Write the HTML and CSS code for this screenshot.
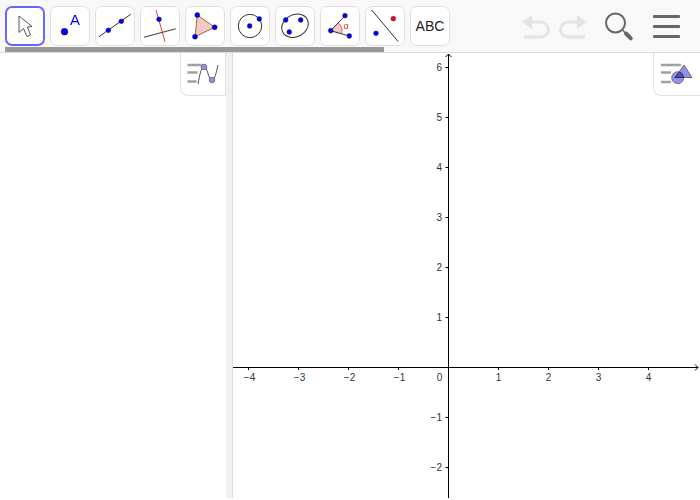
FILE: index.html
```html
<!DOCTYPE html>
<html lang="en">
<head>
<meta charset="utf-8">
<title>GeoGebra Graphing</title>
<link rel="stylesheet" href="styles.css">
</head>
<body>
<div class="app">
  <header class="toolbar">
    <div class="tools">
      <button class="tool active"><svg viewBox="0 0 36 36"><path d="M12 8v16.500l4.500-4 3.500 8 3.500-1.500-3-8 4.500-.500z" fill="#fff" stroke="#555" stroke-width="1"/></svg></button>
      <button class="tool"><svg viewBox="0 0 38 38"><circle cx="13.500" cy="24.700" r="3.400" class="pt"/><text x="19" y="18" class="ico-a">A</text></svg></button>
      <button class="tool"><svg viewBox="0 0 38 38"><line x1="3" y1="29.700" x2="34.700" y2="7.300" class="ln"/><circle cx="12.300" cy="23.300" r="2.400" class="pt"/><circle cx="25.300" cy="14.300" r="2.400" class="pt"/></svg></button>
      <button class="tool"><svg viewBox="0 0 38 38"><line x1="15" y1="3" x2="24" y2="34.700" stroke="#f33"/><line x1="3" y1="30.300" x2="34.700" y2="21.700" stroke="#444" stroke-width="1.100"/><circle cx="18" cy="12.300" r="2.400" class="pt"/></svg></button>
      <button class="tool"><svg viewBox="0 0 38 38"><path d="M11.300 8 28.700 20.300 9 29.700z" fill="#eecbc3" stroke="#a5654f"/><circle cx="11.300" cy="8" r="2.500" class="pt"/><circle cx="28.700" cy="20.300" r="2.500" class="pt"/><circle cx="9" cy="29.700" r="2.500" class="pt"/></svg></button>
      <button class="tool"><svg viewBox="0 0 38 38"><circle cx="19" cy="19" r="11.700" class="cv"/><circle cx="18.700" cy="19" r="2.400" class="pt"/><circle cx="28.300" cy="12" r="2.400" class="pt"/></svg></button>
      <button class="tool"><svg viewBox="0 0 38 38"><ellipse cx="19" cy="18.800" rx="13.800" ry="11" transform="rotate(-28 19 18.800)" class="cv"/><circle cx="9.700" cy="13" r="2.400" class="pt"/><circle cx="24.700" cy="13" r="2.400" class="pt"/><circle cx="13.300" cy="25" r="2.400" class="pt"/></svg></button>
      <button class="tool"><svg viewBox="0 0 38 38"><path d="M9.700 23.700 17 15.700a11 11 0 0 1 3.700 10.700z" fill="#eecbc3"/><path d="M24 8.700 9.700 23.700 28.300 29" class="cv"/><path d="M17 15.700a11 11 0 0 1 3.700 10.700" fill="none" stroke="#e55"/><text x="22.500" y="21.500" class="ico-alpha">α</text><circle cx="24" cy="8.700" r="2.400" class="pt"/><circle cx="9.700" cy="23.700" r="2.400" class="pt"/><circle cx="28.300" cy="29" r="2.400" class="pt"/></svg></button>
      <button class="tool"><svg viewBox="0 0 38 38"><line x1="5.700" y1="3" x2="32.300" y2="34.700" class="ln"/><circle cx="27.300" cy="11.700" r="2.400" fill="#e6001e" stroke="#600" stroke-width=".4"/><circle cx="10" cy="26.300" r="2.400" class="pt"/></svg></button>
      <button class="tool abc">ABC</button>
    </div>
    <div class="scrollbar"></div>
    <div class="actions">
      <svg class="undo" viewBox="0 0 30 26"><path d="M10 7h10a7.500 7.500 0 0 1 0 15H3" class="und"/><path d="M1 7 11 0v14z" fill="#e4e4e4"/></svg>
      <svg class="redo" viewBox="0 0 30 26"><path d="M20 7H10a7.500 7.500 0 0 0 0 15h17" class="und"/><path d="M29 7 19 0v14z" fill="#e4e4e4"/></svg>
      <svg class="search" viewBox="0 0 30 30"><circle cx="11.500" cy="12" r="9.500" fill="none" stroke="#666" stroke-width="2"/><path d="M18.500 19l4 4" stroke="#666" stroke-width="1.500"/><path d="M22 22.500l4.800 4.800" stroke="#666" stroke-width="4" stroke-linecap="round"/></svg>
      <div class="menu"><span></span><span></span><span></span></div>
    </div>
  </header>
  <main class="workspace">
    <aside class="algebra">
      <button class="stylebtn stylebtn-left"><svg viewBox="0 0 36 30"><path d="M1.500 6h14M1.500 13.500h10M1.500 22.500h9" stroke="#a0a0a0" stroke-width="2.600"/><path d="M12 25C14 15 15 8 18 8 22 8 22 21 26 21 29 21 30 14 32 6" fill="none" stroke="#555"/><circle cx="18" cy="8" r="2.800" fill="#9090e8" stroke="#555" stroke-width=".7"/><circle cx="26" cy="21" r="2.800" fill="#9090e8" stroke="#555" stroke-width=".7"/></svg></button>
    </aside>
    <div class="divider"></div>
    <section class="graphics">
      <svg class="grid" width="467" height="445" viewBox="233 53 467 445">
        <path d="M233 367.500H698M695 364.500l3 3-3 3M448.500 498V54M445.500 57l3-3 3 3" fill="none" stroke="#000"/>
        <path d="M248.500 367v3M298.500 367v3M348.500 367v3M398.500 367v3M498.500 367v3M548.500 367v3M598.500 367v3M648.500 367v3M445.500 67.500h3M445.500 117.500h3M445.500 167.500h3M445.500 217.500h3M445.500 267.500h3M445.500 317.500h3M445.500 417.500h3M445.500 467.500h3" stroke="#000"/>
        <g class="lx">
          <text x="249.500" y="381">−4</text><text x="299.500" y="381">−3</text><text x="349.500" y="381">−2</text><text x="399.500" y="381">−1</text>
          <text x="439.500" y="381">0</text>
          <text x="498.500" y="381">1</text><text x="548.500" y="381">2</text><text x="598.500" y="381">3</text><text x="648.500" y="381">4</text>
        </g>
        <g class="ly">
          <text x="442" y="71">6</text><text x="442" y="121">5</text><text x="442" y="171">4</text><text x="442" y="221">3</text><text x="442" y="271">2</text><text x="442" y="321">1</text><text x="442" y="421">−1</text><text x="442" y="471">−2</text>
        </g>
      </svg>
      <button class="stylebtn stylebtn-right"><svg viewBox="0 0 36 30"><path d="M2 6h20M2 13.500h10M2 23h10" stroke="#a0a0a0" stroke-width="2.600"/><circle cx="18.700" cy="18.700" r="6" fill="#9090f0" stroke="#666" stroke-width=".8"/><path d="M25 6 33 18.500H16z" fill="#9090f0" stroke="#555" stroke-width=".8"/><path d="M16 18.500 20.500 12.900A6 6 0 0 1 24.500 18.500z" fill="#5050c0" stroke="#222" stroke-width=".8"/></svg></button>
    </section>
  </main>
</div>
</body>
</html>
```
FILE: styles.css
```css
* { box-sizing: border-box; }
html, body { margin: 0; height: 100%; background: #fff; overflow: hidden; }
body { font-family: "Liberation Sans", Arial, sans-serif; }
.app { display: flex; flex-direction: column; height: 498px; }
.toolbar { position: relative; display: flex; justify-content: space-between; height: 53px; flex: none; padding: 6px 20px 0 5px; background: #f8f8f8; border-bottom: 1px solid #ddd; }
.tools { display: flex; gap: 5px; align-items: flex-start; opacity: .999; }
.tool { width: 40px; height: 40px; padding: 0; background: #fff; border: 1px solid #e0e0e0; border-radius: 7px; font-family: inherit; color: #222; }
.tool svg { display: block; width: 38px; height: 38px; margin: 0; }
.tool.active { border: 2px solid #6666ff; border-radius: 7px; }
.tool.active svg { width: 36px; height: 36px; }
.abc { font-size: 14px; }
.ico-a { font: 15px "Liberation Sans", sans-serif; fill: #0000f0; }
.ico-alpha { font: 9px "Liberation Sans", sans-serif; fill: #e33; }
.ln { stroke: #333; stroke-width: 1; }
.cv { fill: none; stroke: #333; stroke-width: 1; }
.pt { fill: #0000e6; stroke: #00007a; stroke-width: .4; }
.scrollbar { position: absolute; left: 5px; top: 47px; width: 379px; height: 5px; background: #999; }
.actions { display: flex; align-items: flex-start; }
.undo, .redo { width: 30px; height: 26px; margin-top: 9px; }
.undo { margin-right: 7px; }
.und { fill: none; stroke: #e4e4e4; stroke-width: 3; }
.search { width: 30px; height: 30px; margin-left: 16px; margin-right: 19px; margin-top: 5px; overflow: visible; }
.menu { display: flex; flex-direction: column; gap: 7px; width: 27px; margin-top: 9px; }
.menu span { height: 3px; background: #666; border-radius: 1px; }
.workspace { display: flex; flex: 1; min-height: 0; }
.algebra { position: relative; width: 226px; flex: none; background: #fff; }
.divider { width: 7px; flex: none; background: #f1f1f1; border-right: 1px solid #ddd; }
.graphics { position: relative; flex: 1; min-width: 0; overflow: hidden; background: #fff; }
.grid { display: block; opacity: .999; }
.lx text { font: 10px "Liberation Sans", sans-serif; text-anchor: middle; fill: #333; }
.ly text { font: 10px "Liberation Sans", sans-serif; text-anchor: end; fill: #333; }
.stylebtn { position: absolute; top: 0; right: 0; width: 46px; height: 43px; padding: 0; background: #fff; border: 1px solid #e2e2e2; border-top: 0; }
.stylebtn svg { display: block; position: absolute; left: 5px; top: 6px; width: 36px; height: 30px; overflow: visible; }
.stylebtn-left { border-radius: 0 0 0 8px; }
.stylebtn-right { border-radius: 0 0 0 8px; border-right: 0; width: 47px; }
```
